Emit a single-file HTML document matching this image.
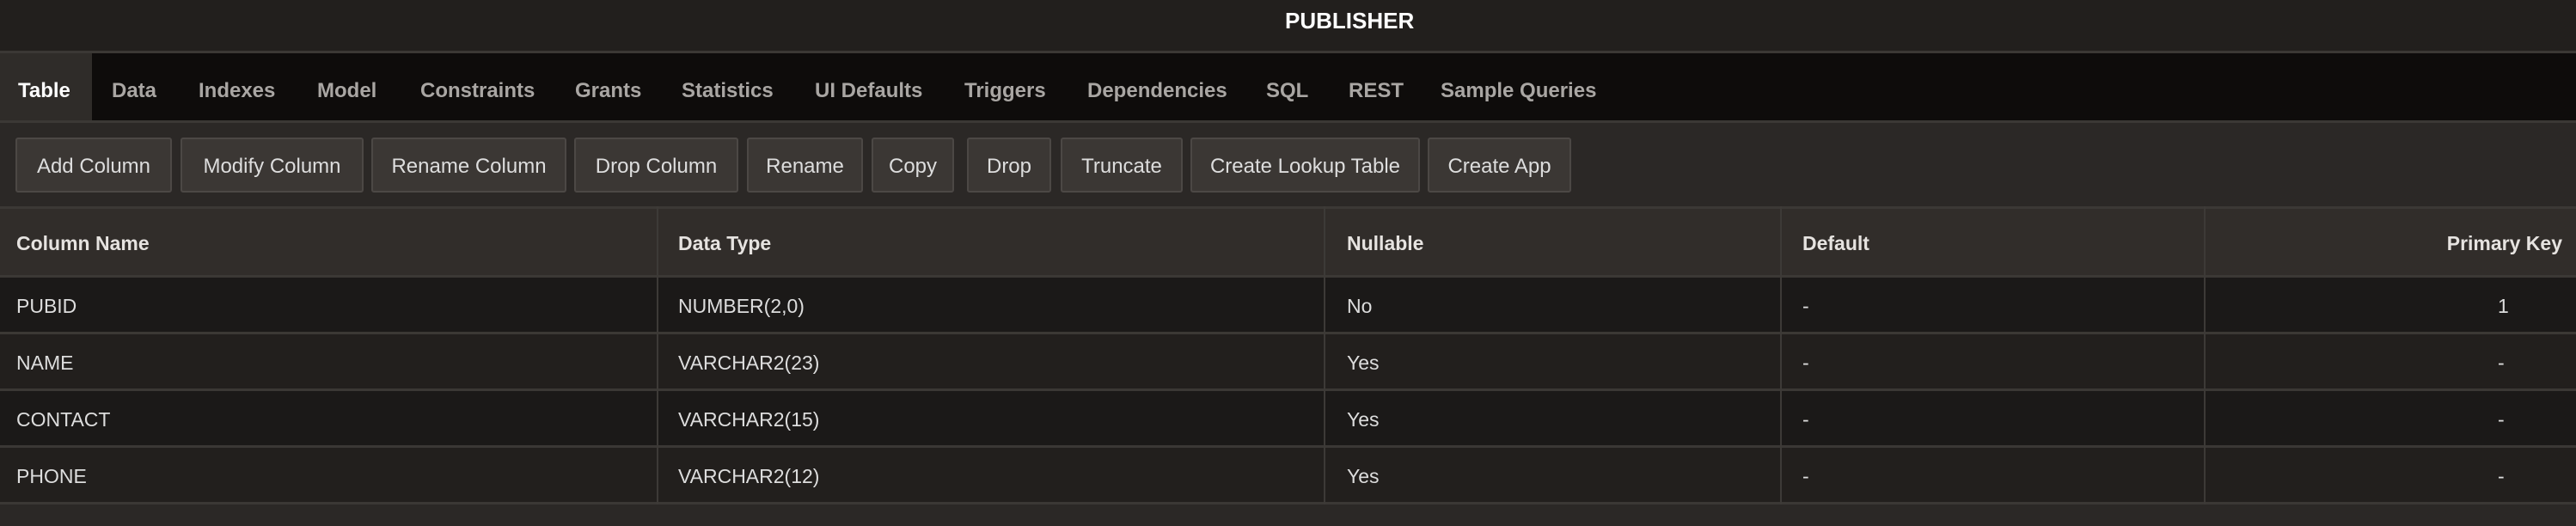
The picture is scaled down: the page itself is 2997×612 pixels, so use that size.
<!DOCTYPE html>
<html><head><meta charset="utf-8"><style>
*{margin:0;padding:0;box-sizing:border-box}
body{width:2997px;height:612px;background:#2b2826;font-family:"Liberation Sans",sans-serif;position:relative;overflow:hidden;color:#ddd}
.a{position:absolute}
#title{left:0;top:0;width:2997px;height:62px;background:#221f1d;border-bottom:3px solid #3b3835}
#title span{position:absolute;left:1495px;top:9px;font-weight:bold;font-size:26px;color:#fff}
#tabs{left:0;top:62px;width:2997px;height:81px;background:#0e0c0b;border-bottom:3px solid #3b3835}
#act{left:0;top:62px;width:107px;height:78px;background:#2f2c29}
.t{position:absolute;top:92px;font-weight:bold;font-size:24px;color:#a9a6a3;white-space:nowrap}
.b{position:absolute;top:160px;height:64px;background:#3b3734;border:2px solid #4c4845;border-radius:3px;font-size:24px;color:#ddd;text-align:center;line-height:63px;white-space:nowrap}
#hdr{left:0;top:240px;width:2997px;height:83px;background:#312d2a;border-top:3px solid #3b3835;border-bottom:3px solid #3b3835}
.r{position:absolute;left:0;width:2997px;height:66px;border-bottom:3px solid #3b3835}
.v{position:absolute;top:240px;width:2px;height:347px;background:#3d3a37}
.h{position:absolute;top:270px;font-weight:bold;font-size:23px;color:#e6e3e0;white-space:nowrap}
.c{position:absolute;font-size:23px;color:#ddd;white-space:nowrap}
</style></head><body>
<div id="title" class="a"><span>PUBLISHER</span></div>
<div id="tabs" class="a"></div>
<div id="act" class="a"></div>
<div class="t" style="left:21px;color:#fff">Table</div>
<div class="t" style="left:130px">Data</div>
<div class="t" style="left:231px">Indexes</div>
<div class="t" style="left:369px">Model</div>
<div class="t" style="left:489px">Constraints</div>
<div class="t" style="left:669px">Grants</div>
<div class="t" style="left:793px">Statistics</div>
<div class="t" style="left:948px">UI Defaults</div>
<div class="t" style="left:1122px">Triggers</div>
<div class="t" style="left:1265px">Dependencies</div>
<div class="t" style="left:1473px">SQL</div>
<div class="t" style="left:1569px">REST</div>
<div class="t" style="left:1676px">Sample Queries</div>

<div class="b" style="left:18px;width:182px">Add Column</div>
<div class="b" style="left:210px;width:213px">Modify Column</div>
<div class="b" style="left:432px;width:227px">Rename Column</div>
<div class="b" style="left:668px;width:191px">Drop Column</div>
<div class="b" style="left:869px;width:135px">Rename</div>
<div class="b" style="left:1014px;width:96px">Copy</div>
<div class="b" style="left:1125px;width:98px">Drop</div>
<div class="b" style="left:1234px;width:142px">Truncate</div>
<div class="b" style="left:1385px;width:267px">Create Lookup Table</div>
<div class="b" style="left:1661px;width:167px">Create App</div>

<div id="hdr" class="a"></div>
<div class="r" style="top:323px;background:#1b1918"></div>
<div class="r" style="top:389px;background:#221f1d"></div>
<div class="r" style="top:455px;background:#1b1918"></div>
<div class="r" style="top:521px;background:#221f1d"></div>
<div class="v" style="left:764px"></div>
<div class="v" style="left:1540px"></div>
<div class="v" style="left:2071px"></div>
<div class="v" style="left:2564px"></div>

<div class="h" style="left:19px">Column Name</div>
<div class="h" style="left:789px">Data Type</div>
<div class="h" style="left:1567px">Nullable</div>
<div class="h" style="left:2097px">Default</div>
<div class="h" style="right:16px">Primary Key</div>

<div class="c" style="left:19px;top:343px">PUBID</div>
<div class="c" style="left:789px;top:343px">NUMBER(2,0)</div>
<div class="c" style="left:1567px;top:343px">No</div>
<div class="c" style="left:2097px;top:343px">-</div>
<div class="c" style="left:2906px;top:343px">1</div>

<div class="c" style="left:19px;top:409px">NAME</div>
<div class="c" style="left:789px;top:409px">VARCHAR2(23)</div>
<div class="c" style="left:1567px;top:409px">Yes</div>
<div class="c" style="left:2097px;top:409px">-</div>
<div class="c" style="left:2906px;top:409px">-</div>

<div class="c" style="left:19px;top:475px">CONTACT</div>
<div class="c" style="left:789px;top:475px">VARCHAR2(15)</div>
<div class="c" style="left:1567px;top:475px">Yes</div>
<div class="c" style="left:2097px;top:475px">-</div>
<div class="c" style="left:2906px;top:475px">-</div>

<div class="c" style="left:19px;top:541px">PHONE</div>
<div class="c" style="left:789px;top:541px">VARCHAR2(12)</div>
<div class="c" style="left:1567px;top:541px">Yes</div>
<div class="c" style="left:2097px;top:541px">-</div>
<div class="c" style="left:2906px;top:541px">-</div>
</body></html>
